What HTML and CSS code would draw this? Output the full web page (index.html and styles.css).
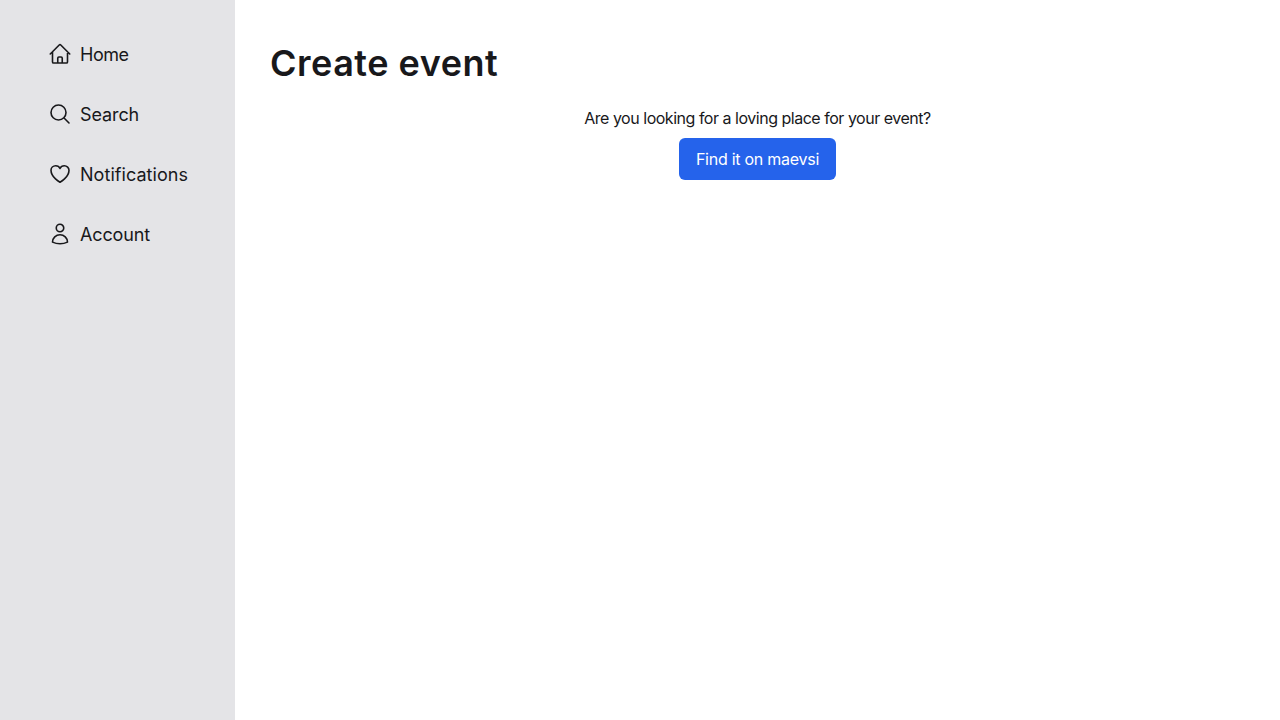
FILE: index.html
```html
<!DOCTYPE html>
<html lang="en">
<head>
<meta charset="utf-8">
<title>Create event</title>
<link rel="stylesheet" href="styles.css">
</head>
<body>
<div class="app">
  <nav class="sidebar">
    <a class="nav-item"><svg class="icon" viewBox="0 0 24 24"><path d="M2.25 12l8.954-8.955c.44-.439 1.152-.439 1.591 0L21.75 12M4.5 9.75v10.125c0 .621.504 1.125 1.125 1.125H9.75v-4.875c0-.621.504-1.125 1.125-1.125h2.25c.621 0 1.125.504 1.125 1.125V21h4.125c.621 0 1.125-.504 1.125-1.125V9.75M8.25 21h8.25"/></svg><span class="label home">Home</span></a>
    <a class="nav-item"><svg class="icon" viewBox="0 0 24 24"><path d="M21 21l-5.197-5.197m0 0A7.5 7.5 0 105.196 5.196a7.5 7.5 0 0010.607 10.607z"/></svg><span class="label search">Search</span></a>
    <a class="nav-item"><svg class="icon" viewBox="0 0 24 24"><path d="M21 8.25c0-2.485-2.099-4.5-4.688-4.5-1.935 0-3.597 1.126-4.312 2.733-.715-1.607-2.377-2.733-4.313-2.733C5.1 3.75 3 5.765 3 8.25c0 7.22 9 12 9 12s9-4.78 9-12z"/></svg><span class="label notifications">Notifications</span></a>
    <a class="nav-item"><svg class="icon" viewBox="0 0 24 24"><path d="M15.75 6a3.75 3.75 0 11-7.5 0 3.75 3.75 0 017.5 0zM4.501 20.118a7.5 7.5 0 0114.998 0A17.933 17.933 0 0112 21.75c-2.676 0-5.216-.584-7.499-1.632z"/></svg><span class="label account">Account</span></a>
  </nav>
  <main class="content">
    <h1 class="title">Create event</h1>
    <div class="prompt">
      <p class="question">Are you looking for a loving place for your event?</p>
      <a class="button">Find it on maevsi</a>
    </div>
  </main>
</div>
</body>
</html>
```
FILE: styles.css
```css
* { box-sizing: border-box; margin: 0; }
body { font-family: Inter, "Open Sans", sans-serif; color: #18181b; background: #fff; }
.app { display: flex; height: 720px; }
.sidebar { width: 235px; background: #e4e4e7; padding: 36px 48px; display: flex; flex-direction: column; gap: 24px; }
.nav-item { display: flex; align-items: center; gap: 8px; height: 36px; font-size: 18px; line-height: 28px; white-space: nowrap; }
.label { padding-top: 2px; }
.home { letter-spacing: -0.45px; }
.search { letter-spacing: -0.1px; }
.notifications { letter-spacing: 0.05px; }
.account { letter-spacing: -0.13px; }
.icon { width: 24px; height: 24px; flex: none; fill: none; stroke: currentColor; stroke-width: 1.6; stroke-linecap: round; stroke-linejoin: round; }
.content { flex: 1; padding: 36px; }
.title { font-size: 36px; line-height: 54px; font-weight: 600; letter-spacing: 0.5px; margin-left: -1px; white-space: nowrap; }
.prompt { display: flex; flex-direction: column; align-items: center; gap: 8px; margin-top: 16px; font-size: 16px; line-height: 24px; }
.question { white-space: nowrap; letter-spacing: -0.48px; }
.button { width: 157px; height: 42px; display: flex; align-items: center; justify-content: center; background: #2563eb; color: #fff; border-radius: 6px; white-space: nowrap; letter-spacing: -0.26px; }
```
